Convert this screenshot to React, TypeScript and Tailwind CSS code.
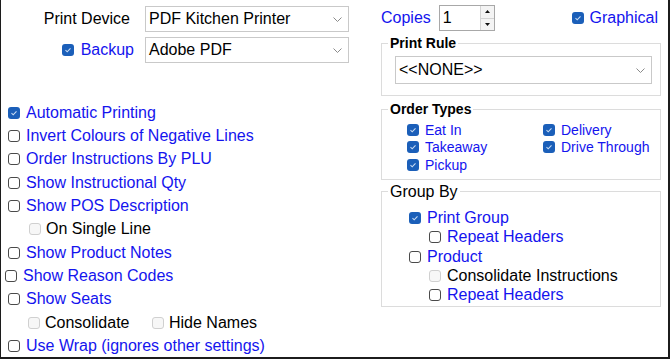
import React from 'react';

type BoxProps = { checked?: boolean; disabled?: boolean };

const Box: React.FC<BoxProps> = ({ checked, disabled }) => {
  if (checked) {
    return (
      <span className="w-3 h-3 shrink-0 rounded-[3px] bg-[#1b5fb9] flex items-center justify-center">
        <svg width="8" height="8" viewBox="0 0 8 8">
          <path d="M1.5 4.2 L3.2 5.8 L6.5 2.3" fill="none" stroke="#c9dcf3" strokeWidth="1.1" />
        </svg>
      </span>
    );
  }
  return (
    <span
      className={`w-3 h-3 shrink-0 rounded-[3px] border ${
        disabled ? 'border-[#d0d0d0] bg-[#f7f7f7]' : 'border-[#4a4a4a] bg-white'
      }`}
    />
  );
};

interface CheckRowProps {
  label: string;
  checked?: boolean;
  disabled?: boolean;
  black?: boolean;
  gap?: string;
  className?: string;
}

const CheckRow: React.FC<CheckRowProps> = ({ label, checked, disabled, black, gap = 'gap-[6px]', className = '' }) => (
  <div className={`flex items-center ${gap} ${className}`}>
    <Box checked={checked} disabled={disabled} />
    <span className={`whitespace-nowrap ${black || disabled ? 'text-black' : 'text-[#1414ee]'}`}>{label}</span>
  </div>
);

const Chevron = () => (
  <svg width="9" height="5" viewBox="0 0 9 5" className="shrink-0">
    <path d="M0.5 0.5 L4.5 4.5 L8.5 0.5" fill="none" stroke="#8a8a8a" strokeWidth="1" />
  </svg>
);

const SelectBox: React.FC<{ value: string; className?: string }> = ({ value, className = '' }) => (
  <div className={`flex items-center justify-between border border-[#c9c9c9] bg-white pl-[3px] pr-[6px] ${className}`}>
    <span className="whitespace-nowrap text-black">{value}</span>
    <Chevron />
  </div>
);

const Spinner = () => (
  <div className="w-[56px] h-[26px] border border-[#a8a8a8] flex bg-white">
    <span className="flex-1 pl-[3px] leading-[24px] text-black">1</span>
    <div className="w-[14px] flex flex-col border-l border-[#d4d4d4]">
      <div className="flex-1 flex items-center justify-center border-b border-[#d4d4d4] bg-[#f4f4f4]">
        <svg width="5" height="3" viewBox="0 0 5 3">
          <path d="M0 3 L2.5 0 L5 3 Z" fill="#111" />
        </svg>
      </div>
      <div className="flex-1 flex items-center justify-center bg-[#f4f4f4]">
        <svg width="5" height="3" viewBox="0 0 5 3">
          <path d="M0 0 L2.5 3 L5 0 Z" fill="#111" />
        </svg>
      </div>
    </div>
  </div>
);

export default function App() {
  const rowH = 'h-[23.33px]';
  return (
    <div className="w-[670px] h-[359px] bg-white border-l border-r-2 border-b-2 border-[#1c1c1c] flex font-['Liberation_Sans',Arial,sans-serif] text-[16px] leading-[18px] overflow-hidden">
      {/* left column */}
      <div className="w-[380px] shrink-0 pt-[6px] flex flex-col">
        <div className="flex flex-col gap-[5px]">
          <div className="flex items-center h-[26px]">
            <div className="w-[144px] pr-[15px] text-right text-black whitespace-nowrap">Print Device</div>
            <SelectBox value="PDF Kitchen Printer" className="w-[204px] h-[26px]" />
          </div>
          <div className="flex items-center h-[26px]">
            <div className="w-[144px] pr-[11px] flex justify-end items-center gap-[7px]">
              <Box checked />
              <span className="text-[#1414ee]">Backup</span>
            </div>
            <SelectBox value="Adobe PDF" className="w-[204px] h-[26px]" />
          </div>
        </div>

        <div className="mt-[38px] flex flex-col">
          <CheckRow className={`${rowH} pl-[7px]`} label="Automatic Printing" checked />
          <CheckRow className={`${rowH} pl-[7px]`} label="Invert Colours of Negative Lines" />
          <CheckRow className={`${rowH} pl-[7px]`} label="Order Instructions By PLU" />
          <CheckRow className={`${rowH} pl-[7px]`} label="Show Instructional Qty" />
          <CheckRow className={`${rowH} pl-[7px]`} label="Show POS Description" />
          <CheckRow className={`${rowH} pl-[28px]`} gap="gap-[5px]" label="On Single Line" disabled />
          <CheckRow className={`${rowH} pl-[7px]`} label="Show Product Notes" />
          <CheckRow className={`${rowH} pl-[4px]`} label="Show Reason Codes" />
          <CheckRow className={`${rowH} pl-[7px]`} label="Show Seats" />
          <div className={`${rowH} flex items-center pl-[27px]`}>
            <CheckRow gap="gap-[5px]" label="Consolidate" disabled className="w-[124px]" />
            <CheckRow gap="gap-[5px]" label="Hide Names" disabled />
          </div>
          <CheckRow className={`${rowH} pl-[7px]`} label="Use Wrap (ignores other settings)" />
        </div>
      </div>

      {/* right column */}
      <div className="w-[280px] shrink-0 pt-[5px] flex flex-col">
        <div className="flex items-center h-[26px]">
          <span className="text-[#1414ee]">Copies</span>
          <div className="ml-[8px]">
            <Spinner />
          </div>
          <div className="ml-auto pr-[3px] flex items-center gap-[6px]">
            <Box checked />
            <span className="text-[#1414ee]">Graphical</span>
          </div>
        </div>

        <fieldset className="mt-[4px] border border-[#dcdcdc] pl-[6px] pr-[8px] pb-[11px]">
          <legend className="px-[2px] text-[14px] leading-[16px] font-bold text-black">Print Rule</legend>
          <div className="pl-[7px] pt-[5px]">
            <SelectBox value="<<NONE>>" className="w-[257px] h-[28px]" />
          </div>
        </fieldset>

        <fieldset className="mt-[5px] border border-[#dcdcdc] pl-[6px] pb-[5px]">
          <legend className="px-[2px] text-[14px] leading-[16px] font-bold text-black">Order Types</legend>
          <div className="pl-[19px] pt-[4px] grid grid-cols-[136px_1fr] text-[14px] leading-[16px]">
            <CheckRow className="h-[17.5px]" label="Eat In" checked />
            <CheckRow className="h-[17.5px]" label="Delivery" checked />
            <CheckRow className="h-[17.5px]" label="Takeaway" checked />
            <CheckRow className="h-[17.5px]" label="Drive Through" checked />
            <CheckRow className="h-[17.5px]" label="Pickup" checked />
          </div>
        </fieldset>

        <fieldset className="mt-[3px] border border-[#dcdcdc] pl-[6px] pb-[1px]">
          <legend className="px-[2px] leading-[18px] text-black">Group By</legend>
          <div className="pt-[8px] flex flex-col">
            <CheckRow className="h-[19.25px] pl-[21px]" label="Print Group" checked />
            <CheckRow className="h-[19.25px] pl-[41px]" label="Repeat Headers" />
            <CheckRow className="h-[19.25px] pl-[21px]" label="Product" />
            <CheckRow className="h-[19.25px] pl-[41px]" label="Consolidate Instructions" disabled />
            <CheckRow className="h-[19.25px] pl-[41px]" label="Repeat Headers" />
          </div>
        </fieldset>
      </div>
    </div>
  );
}
